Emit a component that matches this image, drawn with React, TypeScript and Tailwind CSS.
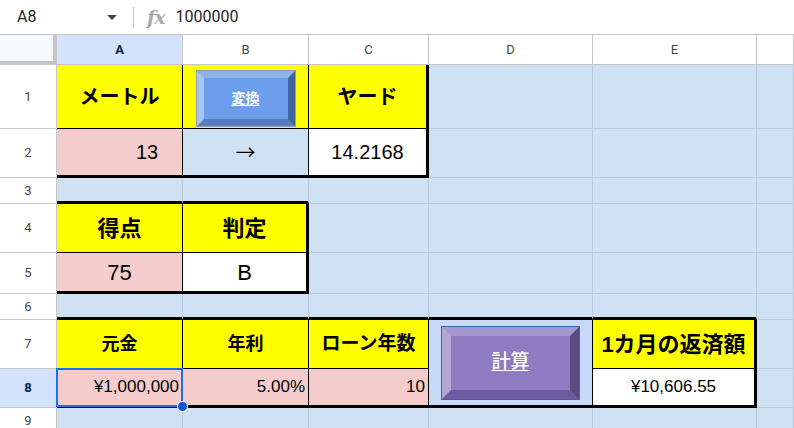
import React from 'react';

const base = 'flex items-center justify-center border-r border-b';
const blue = `${base} bg-[#cfe2f3] border-[#bccad8]`;
const colHead = `${base} bg-white border-[#c4c7c5] text-[13px] text-[#444746] font-['Roboto',sans-serif]`;
const rowHead = `${base} bg-white border-[#c4c7c5] text-[13px] text-[#444746] font-['Roboto',sans-serif]`;
const yellow = 'bg-[#ffff00]';
const pink = 'bg-[#f4cccc]';

const Empty = ({ n = 1, extra = '' }: { n?: number; extra?: string }) => (
  <>
    {Array.from({ length: n }).map((_, i) => (
      <div key={i} className={`${blue} ${extra}`} />
    ))}
  </>
);

const BevelButton = ({
  label,
  outer,
  bevel,
  face,
  text,
}: {
  label: string;
  outer: string;
  bevel: string;
  face: string;
  text: string;
}) => (
  <div className={`border ${outer}`}>
    <div className={`h-full w-full flex items-center justify-center ${bevel} ${face}`}>
      <span className={`text-white underline underline-offset-2 ${text}`}>{label}</span>
    </div>
  </div>
);

export default function App() {
  return (
    <div className="w-[794px] h-[428px] overflow-hidden bg-white font-['Liberation_Sans','Noto_Sans_CJK_JP',sans-serif] text-black">
      {/* formula bar */}
      <div className="h-[35px] flex items-center border-b border-[#c4c7c5] font-['Roboto',sans-serif]">
        <div className="w-[125px] flex items-center justify-between pl-[17px] pr-[8px]">
          <span className="text-[16px] text-[#1f1f1f]">A8</span>
          <svg width="10" height="5" viewBox="0 0 10 5">
            <path d="M0 0 L10 0 L5 5 Z" fill="#444746" />
          </svg>
        </div>
        <div className="ml-[8px] w-px h-[21px] bg-[#c4c7c5]" />
        <span className="ml-[13px] text-[19px] italic font-bold text-[#a8a8a8] font-['DejaVu_Serif',serif] tracking-[-1px]">fx</span>
        <span className="ml-[11px] text-[16px] text-[#1f1f1f]">1000000</span>
      </div>

      <div className="grid grid-cols-[57px_126px_126px_120px_164px_164px_1fr] grid-rows-[30px_64px_49px_26px_49px_41px_26px_49px_39px_26px]">
        {/* header row */}
        <div className="bg-[#f8f9fa] border-r-4 border-b-4 border-[#c4c7c5]" />
        <div className={`${base} bg-[#d3e3fd] border-[#c4c7c5] text-[13px] font-bold text-[#041e49] font-['Roboto',sans-serif]`}>A</div>
        <div className={colHead}>B</div>
        <div className={colHead}>C</div>
        <div className={colHead}>D</div>
        <div className={colHead}>E</div>
        <div className={colHead} />

        {/* row 1 */}
        <div className={rowHead}>1</div>
        <div className={`${base} ${yellow} border-black font-bold text-[20px]`}>メートル</div>
        <div className={`${base} ${yellow} border-black pt-[4px]`}>
          <div className="w-[100px] h-[57px]">
            <BevelButton
              label="変換"
              outer="h-full border-[#8e9db5]"
              bevel="border-[7px] border-t-[#8fb0ea] border-l-[#a9c5f2] border-r-[#41649c] border-b-[#587dbf]"
              face="bg-[#6d9eeb]"
              text="text-[14px] font-bold"
            />
          </div>
        </div>
        <div className={`${base} ${yellow} border-black border-r-[3px] font-bold text-[20px]`}>ヤード</div>
        <Empty n={3} />

        {/* row 2 */}
        <div className={rowHead}>2</div>
        <div className={`${base} ${pink} border-black border-b-[3px] text-[20px] pl-[55px]`}>13</div>
        <div className={`${base} bg-[#cfe2f3] border-black border-b-[3px] text-[20px] font-['Noto_Sans_CJK_JP',sans-serif]`}>→</div>
        <div className={`${base} bg-white border-black border-r-[3px] border-b-[3px] text-[20px]`}>14.2168</div>
        <Empty n={3} />

        {/* row 3 */}
        <div className={rowHead}>3</div>
        <Empty n={2} extra="border-b-[3px] border-b-black" />
        <Empty n={4} />

        {/* row 4 */}
        <div className={rowHead}>4</div>
        <div className={`${base} ${yellow} border-black font-bold text-[22px]`}>得点</div>
        <div className={`${base} ${yellow} border-black border-r-[3px] font-bold text-[22px]`}>判定</div>
        <Empty n={4} />

        {/* row 5 */}
        <div className={rowHead}>5</div>
        <div className={`${base} ${pink} border-black border-b-[3px] text-[22px]`}>75</div>
        <div className={`${base} bg-white border-black border-r-[3px] border-b-[3px] text-[22px]`}>B</div>
        <Empty n={4} />

        {/* row 6 */}
        <div className={rowHead}>6</div>
        <Empty n={5} extra="border-b-[3px] border-b-black" />
        <Empty n={1} />

        {/* row 7 */}
        <div className={rowHead}>7</div>
        <div className={`${base} ${yellow} border-black font-bold text-[18px]`}>元金</div>
        <div className={`${base} ${yellow} border-black font-bold text-[18px]`}>年利</div>
        <div className={`${base} ${yellow} border-black font-bold text-[19px]`}>ローン年数</div>
        <div className={`${base} row-span-2 bg-[#c9daf8] border-black border-b-[3px]`}>
          <div className="w-[139px] h-[74px]">
            <BevelButton
              label="計算"
              outer="h-full border-[#3566b0]"
              bevel="border-[9px] border-t-[#a597cf] border-l-[#b4a7d6] border-r-[#574b80] border-b-[#6c5c9e]"
              face="bg-[#8e7cc3]"
              text="text-[19px] font-medium"
            />
          </div>
        </div>
        <div className={`${base} ${yellow} border-black border-r-[3px] font-bold text-[22px]`}>1カ月の返済額</div>
        <Empty n={1} />

        {/* row 8 */}
        <div className={`${base} bg-[#d3e3fd] border-[#c4c7c5] text-[13px] font-bold text-[#041e49] font-['Roboto',sans-serif]`}>8</div>
        <div className={`${base} relative !justify-end pr-[3px] ${pink} border-black border-b-[3px] text-[17px]`}>
          ¥1,000,000
          <div className="absolute -top-px -left-px -right-px -bottom-[2px] border-2 border-[#1a73e8] pointer-events-none" />
          <div className="absolute -right-[6px] -bottom-[7px] w-[11px] h-[11px] rounded-full bg-[#0b57d0] border border-white" />
        </div>
        <div className={`${base} !justify-end pr-[3px] ${pink} border-black border-b-[3px] text-[17px]`}>5.00%</div>
        <div className={`${base} !justify-end pr-[3px] ${pink} border-black border-b-[3px] text-[17px]`}>10</div>
        <div className={`${base} bg-white border-black border-r-[3px] border-b-[3px] text-[17px]`}>¥10,606.55</div>
        <Empty n={1} />

        {/* row 9 */}
        <div className={rowHead}>9</div>
        <Empty n={6} />
      </div>
    </div>
  );
}
